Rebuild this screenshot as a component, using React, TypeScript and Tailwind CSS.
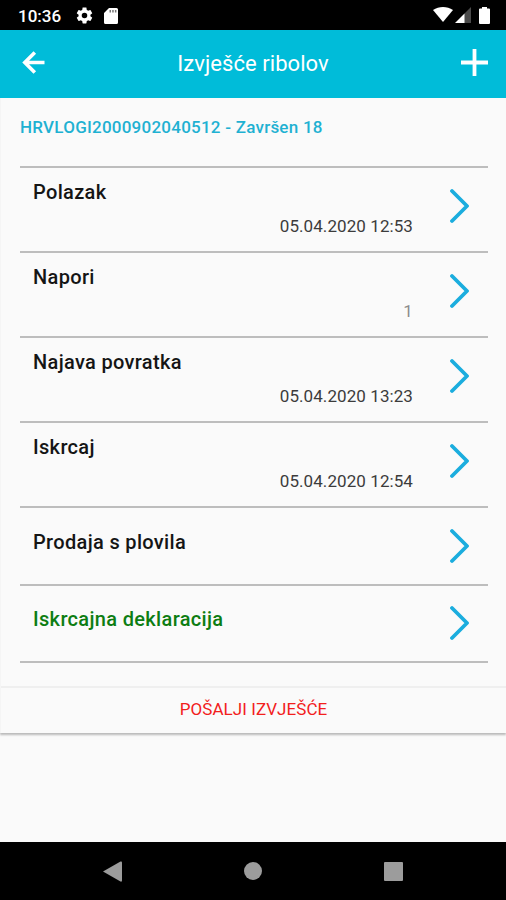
interface ReportRow {
  readonly title: string;
  readonly value?: string;
  readonly muted?: boolean;
  readonly done?: boolean;
}

const ROWS: ReportRow[] = [
  { title: "Polazak", value: "05.04.2020 12:53" },
  { title: "Napori", value: "1", muted: true },
  { title: "Najava povratka", value: "05.04.2020 13:23" },
  { title: "Iskrcaj", value: "05.04.2020 12:54" },
  { title: "Prodaja s plovila" },
  { title: "Iskrcajna deklaracija", done: true },
];

export default function App() {
  return (
    <div className="flex flex-col w-full h-screen bg-[#fafafa] font-['Roboto',sans-serif] overflow-hidden">
      <StatusBar />
      <Header />

      <main className="flex-1">
        {/* ── Report card ──────────────────────────────────────── */}
        <section className="h-[635px] flex flex-col border-l border-[#f5f5f5] shadow-[0_2px_2px_rgba(0,0,0,0.26)]">
          <div className="h-[588px] pl-[19px] pr-[18px]">
            <h2 className="h-[68px] pt-[17px] text-[17px] leading-6 font-medium tracking-[0.24px] text-[#1fb1d2] whitespace-nowrap">
              HRVLOGI2000902040512 - Završen 18
            </h2>
            <ul className="border-b-2 border-[#bdbdbd]">
              {ROWS.map((row) => (
                <Row key={row.title} {...row} />
              ))}
            </ul>
          </div>
          <button className="flex-1 border-t-2 border-[#efefef] pb-px text-[17px] tracking-[0.07px] text-[#f2201c]">
            POŠALJI IZVJEŠĆE
          </button>
        </section>
      </main>

      <NavBar />
    </div>
  );
}

/* ── Status bar ───────────────────────────────────────────────── */

function StatusBar() {
  return (
    <div className="flex items-center h-[30px] pl-[18px] pr-4 bg-black text-white">
      <span className="w-[57px] text-[17px] leading-none font-medium pt-0.5">10:36</span>
      <svg viewBox="0 0 24 24" className="w-[19px] h-[19px] fill-current">
        <path d="M19.43 12.98c.04-.32.07-.64.07-.98s-.03-.66-.07-.98l2.11-1.65c.19-.15.24-.42.12-.64l-2-3.46c-.12-.22-.39-.3-.61-.22l-2.49 1c-.52-.4-1.08-.73-1.69-.98l-.38-2.65C14.46 2.18 14.25 2 14 2h-4c-.25 0-.46.18-.49.42l-.38 2.65c-.61.25-1.17.59-1.69.98l-2.49-1c-.23-.09-.49 0-.61.22l-2 3.46c-.13.22-.07.49.12.64l2.11 1.65c-.04.32-.07.65-.07.98s.03.66.07.98l-2.11 1.65c-.19.15-.24.42-.12.64l2 3.46c.12.22.39.3.61.22l2.49-1c.52.4 1.08.73 1.69.98l.38 2.65c.03.24.24.42.49.42h4c.25 0 .46-.18.49-.42l.38-2.65c.61-.25 1.17-.59 1.69-.98l2.49 1c.23.09.49 0 .61-.22l2-3.46c.12-.22.07-.49-.12-.64l-2.11-1.65zM12 15.5a3.5 3.5 0 1 1 0-7 3.5 3.5 0 0 1 0 7z" />
      </svg>
      <svg viewBox="0 0 14 16" className="w-3.5 h-4 ml-2.5 mt-0.5 fill-current">
        <path d="M5 0H12.5A1.5 1.5 0 0 1 14 1.5V14.5A1.5 1.5 0 0 1 12.5 16H1.5A1.5 1.5 0 0 1 0 14.5V5Z" />
        <path d="M5.5 2H7v2.5H5.500zM8.200 2h1.500v2.500H8.200zM10.900 2h1.500v2.500h-1.500z" className="fill-[#777]" />
      </svg>

      <div className="flex items-center ml-auto">
        <svg viewBox="0 0 20 15" className="w-5 h-[15px] -mt-px fill-current">
          <path d="M0 3C6-1 14-1 20 3L10 15Z" />
        </svg>
        <svg viewBox="0 0 16 16" className="w-4 h-4 ml-0.5 fill-current">
          <path d="M9 7L16 0V16H9Z" className="fill-[#4a4a4a]" />
          <path d="M0 16L9.500 6.500V16Z" />
        </svg>
        <svg viewBox="0 0 11 17" className="w-[11px] h-[17px] ml-2 fill-current">
          <path d="M3 0H8V1.500H10Q11 1.500 11 2.500V16Q11 17 10 17H1Q0 17 0 16V2.500Q0 1.500 1 1.500H3Z" />
        </svg>
      </div>
    </div>
  );
}

/* ── Header ───────────────────────────────────────────────────── */

function Header() {
  return (
    <header className="flex items-center justify-between h-[68px] pl-[22px] pr-[18px] bg-[#00bcd9] text-white">
      <svg
        viewBox="0 0 23 23"
        className="w-[23px] h-[23px] -mt-[3px] fill-none stroke-current stroke-[3.600]"
      >
        <path d="M22.500 11.500H2.800M12.800 1.500L2.800 11.500L12.800 21.500" />
      </svg>
      <h1 className="text-[22px] leading-7 -mt-px tracking-[0.05px]">Izvješće ribolov</h1>
      <svg
        viewBox="0 0 27 27"
        className="w-[27px] h-[27px] -mt-[3px] fill-none stroke-current stroke-[3.800]"
      >
        <path d="M13.500 0V27M0 13.500H27" />
      </svg>
    </header>
  );
}

/* ── Report row ───────────────────────────────────────────────── */

function Row({ title, value, muted, done }: ReportRow) {
  return (
    <li
      className={`flex border-t-2 border-[#bdbdbd] pl-[13px] pr-[19px] ${
        value ? "h-[85px]" : "h-[77.5px] items-center"
      }`}
    >
      <div className="flex-1 flex flex-col">
        <span
          className={`text-[20px] leading-7 font-medium tracking-[0.33px] ${
            value ? "mt-2.5" : "-mt-2"
          } ${done ? "text-[#0d7d12]" : "text-[#151515]"}`}
        >
          {title}
        </span>
        {value && (
          <span
            className={`self-end mr-[37px] mt-2 text-[17px] leading-6 tracking-[0.08px] ${
              muted ? "text-[#8c8c8c]" : "text-[#3c3c3c]"
            }`}
          >
            {value}
          </span>
        )}
      </div>
      <svg
        viewBox="0 0 19 36"
        className={`w-[19px] h-9 fill-none stroke-[#1badde] stroke-[3.800] ${value ? "mt-5" : ""}`}
        strokeLinecap="round"
        strokeLinejoin="round"
      >
        <path d="M2 3L17 18L2 33" />
      </svg>
    </li>
  );
}

/* ── Android navigation ───────────────────────────────────────── */

function NavBar() {
  return (
    <nav className="flex items-center justify-between h-[58px] pl-[103px] pr-[103px] bg-black text-[#9c9c9c]">
      <svg viewBox="0 0 19 21" className="w-[19px] h-[21px] fill-current">
        <path d="M0 10.500L17.500 0.500Q19 0 19 1.500V19.500Q19 21 17.500 20.500Z" />
      </svg>
      <span className="size-[18px] rounded-full bg-current" />
      <span className="size-[19px] rounded-[1px] bg-current" />
    </nav>
  );
}
